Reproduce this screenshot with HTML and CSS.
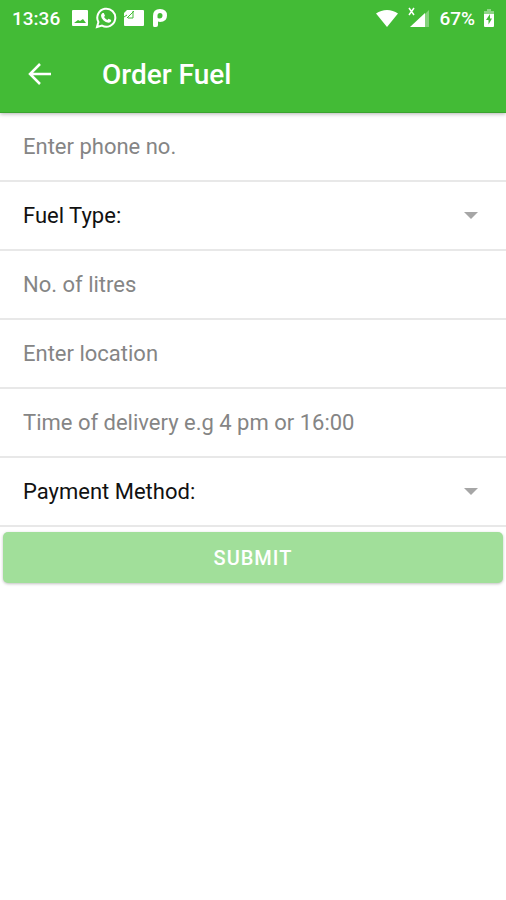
FILE: index.html
```html
<!DOCTYPE html>
<html lang="en">
<head>
    <meta charset="UTF-8">
    <meta name="viewport" content="width=device-width, initial-scale=1.0">
    <title>Order Fuel</title>
    <link rel="stylesheet" href="styles.css">
</head>
<body>
    <header class="header">
        <div class="status-bar">
            <div class="status-group">
                <span class="clock">13:36</span>
                <svg width="18" height="18" viewBox="0 0 18 18">
                    <path fill="#fff" fill-rule="evenodd" d="M2 1h14q1 0 1 1v14q0 1-1 1H2q-1 0-1-1V2q0-1 1-1zM3 14h12l-3-4-3 2-2-1z"/>
                </svg>
                <svg width="22" height="22" viewBox="0 0 22 22">
                    <path fill="none" stroke="#fff" stroke-width="2" d="M2 20l1.400-5A9 9 0 1 1 7 18.600z"/>
                    <path fill="#fff" d="M7.500 6h1.300l1.200 2.800-1 1.300q1.300 2.200 3.300 3l1.200-1.300 2.700 1.300q0 2.600-2.700 2.700-3-.3-5.200-2.600T6 8.800Q6 7 7.500 6z"/>
                </svg>
                <svg width="22" height="18" viewBox="0 0 22 18">
                    <path fill="#fff" d="M4 1h16q1 0 1 1v14q0 1-1 1H2q-1 0-1-1V4z"/>
                    <path fill="none" stroke="#43bb36" d="M1 8l3-2M4 9l7-7M5 9h5V2"/>
                </svg>
                <svg width="18" height="20" viewBox="0 0 18 20">
                    <path fill="#fff" fill-rule="evenodd" d="M9 1q7 0 7 6.500T9 14q-1 0-2-.4V17q0 2-2 2H3q-1 0-1-2V8q0-7 7-7zM9 5Q6.500 5 6.500 7.500v2q0 1 2 1Q11.500 10.300 11.500 7.500 11.500 5 9 5z"/>
                </svg>
            </div>
            <div class="status-group">
                <svg width="24" height="18" viewBox="0 0 24 18">
                    <path fill="#fff" d="M12 18L1 4.500Q6 1 12 1t11 3.500z"/>
                </svg>
                <svg width="24" height="22" viewBox="0 0 24 22">
                    <path fill="#fff" fill-opacity=".35" d="M22 3v17h-4V7z"/>
                    <path fill="#fff" d="M18 6v14H3z"/>
                    <path fill="none" stroke="#fff" stroke-width="1.500" d="M2 1l5 7M7 1L2 8"/>
                </svg>
                <span class="battery-level">67%</span>
                <svg width="12" height="20" viewBox="0 0 12 20">
                    <path fill="#fff" fill-opacity=".4" d="M4 1h4v2h3v4H1V3h3z"/>
                    <path fill="#fff" d="M1 6h10v12q0 1-1 1H2q-1 0-1-1z"/>
                    <path fill="#43bb36" d="M7 6l-4 6h2.500v4.500L9 10.500H7z"/>
                </svg>
            </div>
        </div>
        <div class="toolbar">
            <button type="button" class="back-button" aria-label="Back">
                <svg width="24" height="24" viewBox="0 0 24 24">
                    <path fill="none" stroke="#fff" stroke-width="2.500" d="M23 12H2M12 2L2 12l10 10"/>
                </svg>
            </button>
            <h1>Order Fuel</h1>
        </div>
    </header>

    <form class="order-form">
        <div class="field">
            <input type="tel" name="phone" placeholder="Enter phone no." aria-label="Phone number">
        </div>
        <div class="field">
            <label for="fuelType">Fuel Type:</label>
            <select id="fuelType" name="fuelType">
                <option value=""></option>
            </select>
            <svg class="arrow" width="14" height="7" viewBox="0 0 14 7"><path fill="#a6a6a6" d="M0 0h14L7 7z"/></svg>
        </div>
        <div class="field">
            <input type="text" name="litres" placeholder="No. of litres" aria-label="Number of litres">
        </div>
        <div class="field">
            <input type="text" name="location" placeholder="Enter location" aria-label="Location">
        </div>
        <div class="field">
            <input type="text" name="time" placeholder="Time of delivery e.g 4 pm or 16:00" aria-label="Time of delivery">
        </div>
        <div class="field">
            <label for="payment">Payment Method:</label>
            <select id="payment" name="payment">
                <option value=""></option>
            </select>
            <svg class="arrow" width="14" height="7" viewBox="0 0 14 7"><path fill="#a6a6a6" d="M0 0h14L7 7z"/></svg>
        </div>
        <button type="submit" class="submit-button" disabled>SUBMIT</button>
    </form>
</body>
</html>
```

FILE: styles.css
```css
* {
    box-sizing: border-box;
}

body {
    margin: 0;
    font-family: Roboto, sans-serif;
    background-color: #fff;
    color: #111;
}

.header {
    position: relative;
    background-color: #43bb36;
    color: #fff;
    border-bottom: 1px solid #3aa42f;
    box-shadow: 0 1px 4px rgba(0, 0, 0, 0.3);
}

/* Phone status bar */
.status-bar {
    display: flex;
    justify-content: space-between;
    align-items: center;
    height: 36px;
    padding: 0 11px 0 12px;
    font-size: 19px;
    font-weight: 500;
}

.status-group {
    display: flex;
    align-items: center;
    gap: 8px;
}

.status-group:first-child {
    gap: 6px;
}

.clock {
    margin-right: 5px;
}

/* Toolbar */
.toolbar {
    display: flex;
    align-items: center;
    height: 76px;
    padding: 0 28px;
}

.back-button {
    display: flex;
    padding: 0;
    border: none;
    background: none;
    cursor: pointer;
}

h1 {
    margin: 0 0 0 50px;
    font-size: 28px;
    font-weight: 500;
}

/* Form rows */
.field {
    display: flex;
    align-items: center;
    height: 69px;
    padding: 0 28px 0 23px;
    border-bottom: 2px solid #e8e8e8;
    font-size: 22px;
}

.field input,
.field select {
    flex: 1;
    min-width: 0;
    height: 100%;
    padding: 0;
    border: none;
    outline: none;
    background: none;
    font: inherit;
    color: inherit;
}

.field select {
    appearance: none;
}

.field input::placeholder {
    color: #858585;
}

.arrow {
    pointer-events: none;
}

.submit-button {
    display: block;
    width: calc(100% - 6px);
    height: 51px;
    margin: 5px 3px;
    border: none;
    border-radius: 5px;
    background-color: #a1df9a;
    box-shadow: 0 1px 3px rgba(0, 0, 0, 0.25);
    font-family: inherit;
    font-size: 20px;
    font-weight: 500;
    letter-spacing: 1px;
    color: #fff;
}
```
